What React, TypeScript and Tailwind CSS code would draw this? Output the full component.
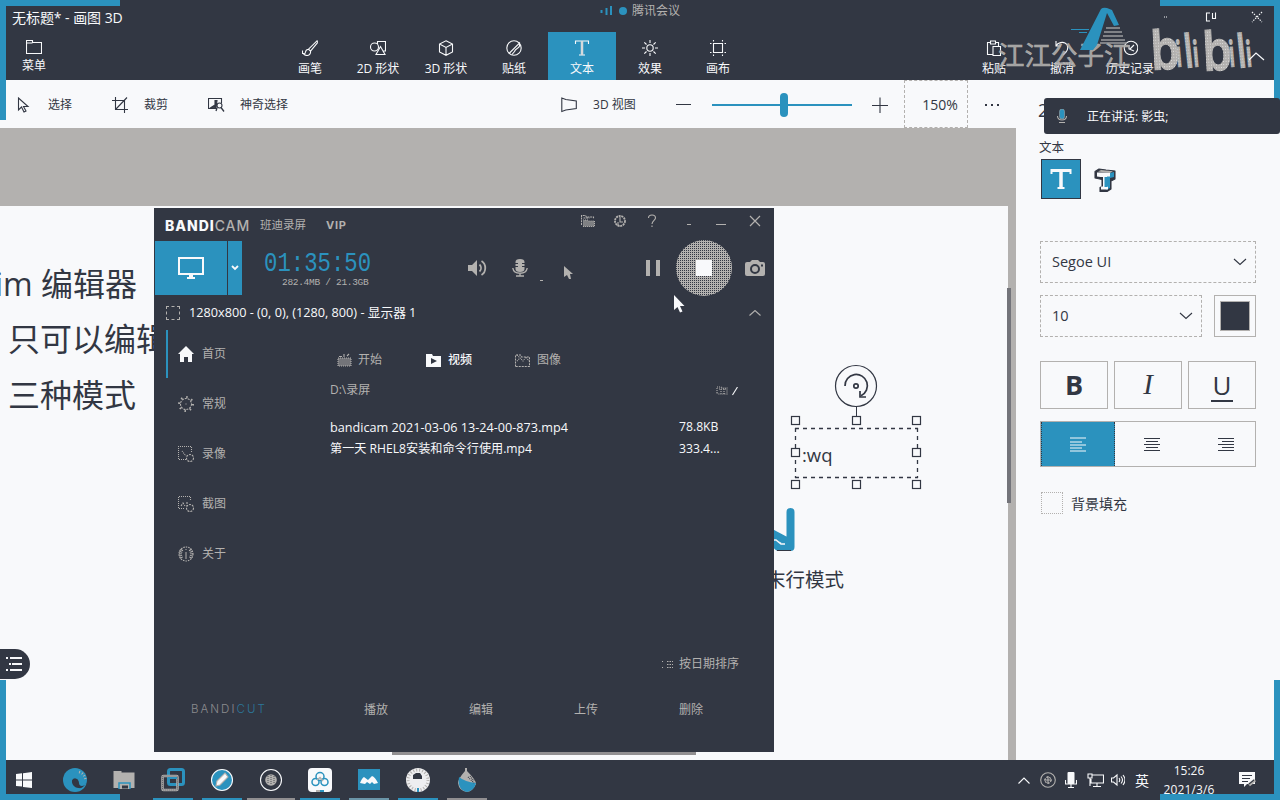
import React from "react";

type IconProps = { children: React.ReactNode; w?: number; h?: number; className?: string };

function Icon({ children, w = 16, h = 16, className = "" }: IconProps) {
  return (
    <svg
      width={w}
      height={h}
      viewBox={`0 0 ${w} ${h}`}
      fill="none"
      stroke="currentColor"
      strokeWidth="1.1"
      className={"block shrink-0 " + className}
    >
      {children}
    </svg>
  );
}

const ribbon = [
  {
    label: "画笔",
    icon: (
      <>
        <path d="M15 .8 6.500 9.200l2 2L15.600 2.500c.5-.9.1-1.700-.6-1.700ZM6.500 9.200 8.500 11.200c.4 2-1 4.300-3.500 4.300-1.600 0-2.500-.5-3.200-1.300 1-.2 1.600-1 1.700-2.200.2-1.700 1.500-2.700 3-2.800Z" />
        <path d="M.5 10.500v3h2" />
      </>
    ),
  },
  {
    label: "2D 形状",
    icon: (
      <>
        <circle cx="4.500" cy="7" r="4" />
        <path d="M7.500 4V1.500H15.500V11h-2.500M10.500 6.500 6 14.500h9Z" />
      </>
    ),
  },
  {
    label: "3D 形状",
    icon: <path d="M8 .8 14.500 4v8L8 15.300 1.500 12V4ZM1.500 4 8 7.500 14.500 4M8 7.500v7.800" />,
  },
  {
    label: "贴纸",
    icon: (
      <>
        <circle cx="8" cy="8" r="7.200" />
        <path d="M3 13.500 13.500 3v3c-1 3-4 2-5 5.500L6 14.500" />
      </>
    ),
  },
  {
    label: "文本",
    icon: (
      <>
        <path d="M1.500 4V1h13v3M5 15h6" />
        <path d="M8 1v14" stroke="#d5d9dc" strokeWidth="2.500" />
      </>
    ),
  },
  {
    label: "效果",
    icon: (
      <>
        <circle cx="8" cy="8" r="3.200" />
        <path d="M8 0v3M8 13v3M0 8h3M13 8h3M2.300 2.300l2.200 2.200M11.500 11.500l2.200 2.200M2.300 13.700l2.200-2.200M11.500 4.500l2.200-2.200" />
      </>
    ),
  },
  {
    label: "画布",
    icon: (
      <path d="M3.500 3.500h9v9h-9ZM3.500 0v1.500M12.500 0v1.500M3.500 14.500V16M12.500 14.500V16M0 3.500h1.500M14.500 3.500H16M0 12.500h1.500M14.500 12.500H16" />
    ),
  },
];

function RibbonButton({ label, icon, active = false }: { label: string; icon: React.ReactNode; active?: boolean }) {
  return (
    <div
      className={
        "flex h-12 w-[68px] shrink-0 flex-col items-center pt-2 " + (active ? "bg-[#2b92be]" : "")
      }
    >
      <Icon>{icon}</Icon>
      <span className="mt-1 text-[12px] leading-[18px] whitespace-nowrap">{label}</span>
    </div>
  );
}

function Header() {
  return (
    <header className="flex h-20 shrink-0 flex-col bg-[#323743] text-[#f8f9fb]">
      <div className="flex h-8 items-center pl-3 pt-[2px]">
        <span className="w-[588px] text-[14px] tracking-[-0.050px]">无标题* - 画图 3D</span>
        <div className="-mt-3 flex items-center text-[#b3b1af]">
          <Icon w={13} h={12} className="text-[#2b92be]">
            <path d="M1.500 5v3M6.500 3v7M11 1v9" strokeWidth="2" />
          </Icon>
          <span className="ml-[6px] h-2 w-2 rounded-full bg-[#2b92be]" />
          <span className="ml-[5px] text-[12px]">腾讯会议</span>
        </div>
        <div className="ml-auto flex items-center text-[#f8f9fb]">
          <Icon w={10} h={12}><path d="M3 6h4" strokeDasharray="1 1" /></Icon>
          <Icon w={12} h={12} className="ml-[34px]"><path d="M5 2H1.500v8H5M7.500 2v6M10.500 1.500v6H8" /></Icon>
          <Icon w={12} h={12} className="ml-[34px] mr-[17px]"><path d="m1 1 10 10M11 1 1 11" strokeDasharray="1.500 1.200" /></Icon>
        </div>
      </div>
      <div className="flex h-12">
        <div className="flex w-[68px] flex-col items-center pt-2">
          <Icon><path d="M.5 .5h6v2h9v11H.5ZM.5 3h6" /></Icon>
          <span className="mt-px text-[12px] leading-[18px]">菜单</span>
        </div>
        <div className="ml-[208px] flex">
          {ribbon.map((r) => (
            <RibbonButton key={r.label} label={r.label} icon={r.icon} active={r.label === "文本"} />
          ))}
        </div>
        <div className="ml-[208px] flex">
          <RibbonButton label="粘贴" icon={<path d="M4.500 2.500h-3v12h5M4.500 1v3h5V1ZM9.500 2.500h3v4M7 6.500h7.500v9H7Z" />} />
          <RibbonButton label="撤消" icon={<path d="M2 1v5h5M2 6c2-4 7-4 9-3 4 2 3 7 1 9l-3 3" />} />
          <RibbonButton
            label="历史记录"
            icon={
              <>
                <circle cx="9" cy="8" r="6.800" />
                <path d="M7 5v4l5 2M12 5l-4 4" />
              </>
            }
          />
        </div>
      </div>
    </header>
  );
}

function ViewBar() {
  return (
    <div className="flex h-12 w-[1016px] shrink-0 items-center bg-[#f8f9fb] pt-px text-[12px] text-[#323743]">
      <div className="flex items-center pl-[17px]">
        <Icon w={13} h={16}><path d="M1.500 1v12l3-3 2.500 5 2-1-2.500-4.500H11Z" /></Icon>
        <span className="ml-[18px]">选择</span>
      </div>
      <div className="ml-[40px] flex items-center">
        <Icon><path d="M3.500 0v12.500H16M0 3.500h12.500V16M15 .5 4 12" /></Icon>
        <span className="ml-4">裁剪</span>
      </div>
      <div className="ml-[40px] flex items-center">
        <Icon w={17}>
          <path d="M9 11.500H.5v-10h13V6" />
          <path d="M3 10.500 7 8V3.500h2L8 11Z" fill="currentColor" />
          <circle cx="11.500" cy="8.500" r="2.500" />
          <path d="m13 10.500 3 4M9 11l-1 3" strokeWidth="1.300" />
        </Icon>
        <span className="ml-[15px]">神奇选择</span>
      </div>
      <div className="ml-[273px] flex w-[75px] items-center">
        <Icon><path d="M.8 1v13.500l4-1.500 10.500-1.500V4L4.800 2.500Z" /></Icon>
        <span className="ml-4 whitespace-nowrap">3D 视图</span>
      </div>
      <div className="ml-[40px] h-px w-[15px] bg-[#323743]" />
      <div className="ml-[21px] flex h-6 w-[140px] items-center">
        <div className="h-[2px] w-[68px] bg-[#2b92be]" />
        <div className="h-6 w-2 rounded-[4px] bg-[#2b92be]" />
        <div className="h-[2px] w-16 bg-[#2b92be]" />
      </div>
      <Icon className="ml-5"><path d="M0 8.500h16M8 .5v16" /></Icon>
      <div className="-mt-px ml-4 flex h-12 w-16 items-center justify-center border border-dashed border-[#b3b1af] pl-2 text-[14px]">150%</div>
      <div className="ml-[17px] flex gap-1">
        <span className="h-[2px] w-[2px] bg-[#323743]" />
        <span className="h-[2px] w-[2px] bg-[#323743]" />
        <span className="h-[2px] w-[2px] bg-[#323743]" />
      </div>
    </div>
  );
}

const handles = [
  [791, 416], [852, 416], [912, 416],
  [791, 448], [912, 448],
  [791, 480], [852, 480], [912, 480],
];

function Canvas() {
  return (
    <div className="flex h-[632px] w-[1016px] flex-col bg-[#b3b1af] pt-[78px]">
      <div className="relative h-[554px] w-[1008px] overflow-hidden bg-[#f8f9fb] text-[#323743]">
        <div className="absolute left-[-5px] top-[54px] whitespace-nowrap text-[32px] leading-[48px]">im 编辑器</div>
        <div className="absolute left-2 top-[109px] whitespace-nowrap text-[32px] leading-[48px]">只可以编辑</div>
        <div className="absolute left-2 top-[165px] whitespace-nowrap text-[32px] leading-[48px]">三种模式</div>
        <div className="absolute right-[164px] top-[359px] whitespace-nowrap text-[19.500px] leading-[30px]">末行模式</div>
        <div className="absolute left-[802px] top-[234px] text-[18.500px] leading-[30px]">:wq</div>
        <svg className="absolute left-0 top-0" width="1008" height="554" viewBox="0 206 1008 554" fill="none" stroke="#323743">
          <circle cx="856" cy="386" r="20.500" strokeWidth="1.200" />
          <path d="M845 386a11.200 11.200 0 1 1 16 9.800" strokeWidth="1.700" />
          <path d="M860 391v6h6" strokeWidth="1.700" />
          <circle cx="856" cy="386" r="2.200" strokeWidth="1.700" />
          <path d="M856.500 407v9" />
          <path d="M795 428.500H918M795 477.500H918" strokeDasharray="4 4" strokeWidth="1.300" />
          <path d="M795.500 428v50M917.500 428v50" strokeDasharray="4 4" strokeWidth="1.300" />
          {handles.map(([x, y]) => (
            <rect key={`${x}-${y}`} x={x + 0.5} y={y + 0.5} width="8" height="8" fill="#f8f9fb" strokeWidth="1.200" />
          ))}
          <path d="M790.500 512v35h-12l-14-13 3-3 17 9" stroke="#2b92be" strokeWidth="8" strokeLinejoin="round" strokeLinecap="round" />
          <path d="M774 540h2l5 4h4" stroke="#f8f9fb" strokeWidth="1.500" />
          <path d="M777 550.500h14" />
        </svg>
        <div className="absolute left-[392px] top-[546px] h-[3px] w-[304px] bg-[#918f91]" />
      </div>
    </div>
  );
}

const alignments = [
  { d: "M0 1h16M0 5h12M0 8h16M0 11h12M0 14h16", cell: "w-[74px] border-x border-dotted border-[#323743] bg-[#2b92be] text-[#f8f9fb]" },
  { d: "M0 1.500h16M2 4.500h12M0 7.500h16M2 10.500h12M0 13.500h16", cell: "w-[74px]" },
  { d: "M0 1.500h16M4 4.500h12M0 7.500h16M4 10.500h12M0 13.500h16", cell: "w-[66px] pl-2" },
];

function Chevron() {
  return <Icon w={14} h={8}><path d="m1 1 6 5.500L13 1" /></Icon>;
}

function SidePanel() {
  return (
    <aside className="flex h-[680px] w-[264px] flex-col bg-[#f8f9fb] pl-6 text-[#323743]">
      <div className="-ml-[2px] mt-[14px] h-8 text-[18px] leading-8">2D 文本</div>
      <div className="-ml-px mt-[12px] text-[12.500px] leading-[19px]">文本</div>
      <div className="mt-[2px] flex h-10 items-center">
        <div className="ml-px flex h-10 w-10 items-center justify-center border border-[#323743] bg-[#2b92be] text-[#f8f9fb]">
          <Icon w={22} h={22}>
            <path d="M1.500 6V2h19v4M7.500 20h7M2 3h18" strokeWidth="2" />
            <path d="M11 2v18" strokeWidth="3.500" />
          </Icon>
        </div>
        <Icon w={23} h={25} className="ml-[13px] mt-[2px]">
          <path d="M1 3.500 5 1l7 1 9 1v8l-4 2v8l-4 2.500H6v-4l2-1v-7L1 10Z" fill="#323743" stroke="#323743" strokeLinejoin="round" />
          <path d="m16 5 4-1v5l-4 1v10l-4 2V8h4Z" fill="#2b92be" stroke="none" />
          <path d="M3 4.500h13v4h-3v10h1v3H7v-3h2V9H6.500L3 8.500Z" fill="#f8f9fb" stroke="none" />
          <path d="M4 3.500 7 2l12 1.300-3 1.700Z" fill="#b3b1af" stroke="none" />
          <path d="M12 9v10" stroke="#2b92be" strokeWidth="3" />
        </Icon>
      </div>
      <div className="mt-[42px] flex h-[42px] w-[216px] items-center justify-between border border-dashed border-[#b3b1af] pl-[11px] pr-2 text-[14.500px]">
        <span className="-mt-px">Segoe UI</span>
        <Chevron />
      </div>
      <div className="mt-3 flex gap-3">
        <div className="flex h-[42px] w-[162px] items-center justify-between border border-dashed border-[#b3b1af] pl-[11px] pr-2 text-[14.500px]">
          <span className="-mt-px">10</span>
          <Chevron />
        </div>
        <div className="flex h-[42px] w-[42px] items-center justify-center border border-[#b3b1af]">
          <div className="h-[30px] w-[30px] border border-[#b3b1af] bg-[#323743]" />
        </div>
      </div>
      <div className="mt-6 flex gap-[6px]">
        <div className="flex h-12 w-[68px] items-center justify-center border border-[#b3b1af] text-[27px] font-bold">B</div>
        <div className="flex h-12 w-[68px] items-center justify-center border border-[#b3b1af] font-['Liberation_Serif'] text-[29px] italic">I</div>
        <div className="flex h-12 w-[68px] flex-col items-center border border-[#b3b1af] pt-[7px]">
          <span className="h-[31px] text-[26px] leading-[33px]">U</span>
          <span className="h-[2px] w-[22px] shrink-0 bg-[#323743]" />
        </div>
      </div>
      <div className="mt-3 flex h-[46px] w-[216px] border border-[#b3b1af]">
        {alignments.map((a) => (
          <div key={a.d} className={"flex shrink-0 items-center justify-center " + a.cell}>
            <Icon h={15}><path d={a.d} strokeWidth="1" /></Icon>
          </div>
        ))}
      </div>
      <div className="mt-[25px] flex items-center text-[14px]">
        <div className="ml-px h-[22px] w-[22px] border border-dotted border-[#b3b1af]" />
        <span className="ml-2">背景填充</span>
      </div>
    </aside>
  );
}

const nav = [
  { label: "首页", icon: <path d="M8 0 0 8h2v8h4v-5h4v5h4V8h2Z" fill="#f8f9fb" stroke="none" /> },
  {
    label: "常规",
    icon: (
      <>
        <circle cx="8" cy="8" r="5.500" strokeDasharray="2 1" />
        <circle cx="8" cy="8" r="7" strokeDasharray="1.500 4" strokeWidth="2" />
        <path d="M7.500 8h1" />
      </>
    ),
  },
  {
    label: "录像",
    icon: (
      <>
        <path d="M8 13.500H.5V.5h13V6" strokeDasharray="1 1" />
        <circle cx="12" cy="12" r="3.500" strokeDasharray="2 1" />
        <path d="m4 5 4 5" strokeDasharray="1 1" />
      </>
    ),
  },
  {
    label: "截图",
    icon: (
      <>
        <path d="M6 12.500H.5V.5h12V4" strokeDasharray="1 1" />
        <circle cx="12" cy="12" r="3.500" strokeDasharray="2 1" />
        <path d="m3 10 2-3 2 3M9 6v4" strokeDasharray="2 1" />
      </>
    ),
  },
  {
    label: "关于",
    icon: (
      <>
        <circle cx="8" cy="8" r="7" strokeDasharray="1.500 1" />
        <path d="M4 3.500Q1 8 4 12.500M12 3.500q3 4.500 0 9" strokeWidth="3" strokeDasharray="1 1" />
        <path d="M8 3v1M8 6v7" strokeWidth="1" />
      </>
    ),
  },
];

const files = [
  { name: "bandicam 2021-03-06 13-24-00-873.mp4", size: "78.8KB", type: "text-[12.650px]" },
  { name: "第一天 RHEL8安装和命令行使用.mp4", size: "333.4...", type: "text-[12.150px]" },
];

function Bandicam() {
  return (
    <section className="absolute left-[154px] top-[208px] flex h-[544px] w-[620px] flex-col bg-[#323743] text-[12px] text-[#b3b1af]">
      <div className="flex h-[33px] shrink-0 items-center pl-[11px] pt-px">
        <span className="w-[95px] font-['Inter'] text-[14px] font-extrabold tracking-[0.950px] text-[#f8f9fb]">
          BANDI<span className="font-medium text-[#b3b1af]">CAM</span>
        </span>
        <span className="w-[66px] text-[11.500px]">班迪录屏</span>
        <span className="w-[90px] font-['Inter'] text-[11px] font-bold tracking-[0.700px]">VIP</span>
        <div className="-mt-2 ml-[165px] flex items-center">
          <Icon w={14} h={14}>
            <path d="M.5 11V1.500h4l1 1.500h7v2M2.500 4h6" strokeDasharray="2 .7" />
            <path d="M2.500 12.500V6h4l1 1h6v5.500Z" fill="currentColor" fillOpacity=".6" strokeDasharray="1 1" />
          </Icon>
          <Icon w={12} h={14} className="ml-[19px]">
            <circle cx="6" cy="7" r="5" strokeWidth="1.800" strokeDasharray="2 .7" />
            <path d="M6 3v5h3M4 12V8" />
          </Icon>
          <Icon w={10} h={14} className="ml-[21px]"><path d="M1.500 4c0-4 7-4 7 0 0 2-3.500 3-3.500 6M5 11.500V13" /></Icon>
          <span className="ml-[30px] mt-2 h-[2px] w-1 border-t border-[#b3b1af]" />
          <span className="ml-[25px] mt-2 h-[2px] w-[10px] border-t border-[#b3b1af]" />
          <Icon w={12} h={12} className="ml-[23px]"><path d="m1 1 10 10M11 1 1 11" strokeWidth="1.200" /></Icon>
        </div>
      </div>
      <div className="flex h-[54px] shrink-0 items-center pl-px">
        <div className="flex h-[54px] w-[72px] shrink-0 items-center justify-center bg-[#2b92be] text-[#f8f9fb]">
          <Icon w={26} h={22}>
            <path d="M1 1h24v16H1Z" strokeWidth="2" />
            <path d="M11 18h4v2h2v2H9v-2h2Z" fill="currentColor" stroke="none" />
          </Icon>
        </div>
        <div className="ml-px flex h-[54px] w-[14px] shrink-0 items-center justify-center bg-[#2b92be] text-[#f8f9fb]">
          <Icon w={8} h={6}><path d="m1 1 3 3 3-3" strokeWidth="1.800" /></Icon>
        </div>
        <div className="ml-[22px] flex w-[204px] shrink-0 flex-col pt-1">
          <span className="block h-[26px] origin-center scale-y-125 font-['Liberation_Mono'] text-[22.300px] leading-[26px] text-[#2b92be]">01:35:50</span>
          <span className="h-[14px] pl-[18px] font-['Liberation_Mono'] text-[9.500px] leading-[14px] tracking-[-0.300px] whitespace-pre">282.4MB / 21.3GB</span>
        </div>
        <Icon w={19} h={18}>
          <path d="M0 6h4l5-5v16l-5-5H0Z" fill="currentColor" stroke="none" />
          <path d="M11.500 5.500c2 2 2 5 0 7M13.500 2c5 3 5 11 0 14" strokeWidth="1.800" />
        </Icon>
        <Icon w={16} h={18} className="ml-[25px]">
          <path d="M3.500 3a4.500 3 0 0 1 9 0v7a4.500 3 0 0 1-9 0Z" fill="currentColor" stroke="none" />
          <path d="M3 4.500h3M10 4.500h3M3 7.500h3M10 7.500h3" stroke="#323743" />
          <path d="M.8 9c1 7 13.400 7 14.400 0M8 14v3M4 17h8" strokeWidth="1.400" />
        </Icon>
        <span className="ml-3 mt-6 h-px w-[3px] bg-[#b3b1af]" />
        <Icon w={9} h={13} className="ml-[21px] mt-2"><path d="M0 0v11l3-2 2 4h2L6 8h3Z" fill="currentColor" stroke="none" /></Icon>
        <div className="ml-[73px] flex gap-[6px]">
          <span className="h-4 w-[4px] bg-[#b3b1af]" />
          <span className="h-4 w-[4px] bg-[#b3b1af]" />
        </div>
        <svg width="56" height="56" viewBox="0 0 56 56" className="ml-4 shrink-0">
          <defs>
            <pattern id="mesh" width="2" height="2" patternUnits="userSpaceOnUse">
              <rect width="2" height="2" fill="#b3b1af" />
              <rect width="1" height="1" fill="#323743" />
            </pattern>
          </defs>
          <circle cx="28" cy="28" r="28" fill="url(#mesh)" />
          <rect x="20" y="20" width="16" height="16" fill="#f8f9fb" />
        </svg>
        <Icon w={20} h={16} className="ml-[13px]">
          <path d="M0 4a2 2 0 0 1 2-2h3l2-2h6l2 2h3a2 2 0 0 1 2 2v10a2 2 0 0 1-2 2H2a2 2 0 0 1-2-2Z" fill="currentColor" stroke="none" />
          <circle cx="10" cy="9" r="4" stroke="#323743" strokeWidth="2" />
          <path d="M16 5.500h2" stroke="#323743" strokeWidth="2" />
        </Icon>
      </div>
      <div className="flex h-[34px] shrink-0 items-center pl-3 pt-px text-[#f8f9fb]">
        <span className="h-[14px] w-[14px] border border-dashed border-[#b3b1af]" />
        <span className="ml-[9px] w-[560px] text-[12.700px] whitespace-nowrap">1280x800 - (0, 0), (1280, 800) - 显示器 1</span>
        <Icon w={12} h={6} className="text-[#b3b1af]"><path d="m.5 5.500 5.500-5 5.500 5" /></Icon>
      </div>
      <div className="flex flex-1">
        <nav className="flex w-[176px] flex-col gap-[2px] pt-px">
          {nav.map((n, i) => (
            <div key={n.label} className={"ml-3 flex h-12 items-center pl-[10px] " + (i === 0 ? "border-l-2 border-[#2b92be]" : "border-l-2 border-transparent")}>
              <Icon>{n.icon}</Icon>
              <span className="ml-2">{n.label}</span>
            </div>
          ))}
        </nav>
        <div className="flex flex-1 flex-col">
          <div className="mt-[21px] flex h-5 items-center pl-[7px]">
            <Icon w={15} h={14}>
              <path d="M1 13V5h13v8Z" fill="currentColor" fillOpacity=".5" strokeDasharray="1 1" />
              <path d="M2 3.500h3M7 1v3M10 3l2-2" />
            </Icon>
            <span className="ml-[6px] w-[68px]">开始</span>
            <Icon w={15} h={13}>
              <path d="M0 0h6l1 2h8v11H0Z" fill="#f8f9fb" stroke="none" />
              <path d="M5 4v6l6-3Z" fill="#323743" stroke="none" />
            </Icon>
            <span className="ml-[7px] w-[67px] font-medium text-[#f8f9fb]">视频</span>
            <Icon w={15} h={13}>
              <path d="M.5 12.500V1h5l1 2h8v9.500Z" strokeDasharray="2 1" />
              <path d="m2 7 3-3 3 3 3-4 3 4M2 1l5 5" strokeDasharray="1 1" />
            </Icon>
            <span className="ml-[7px]">图像</span>
          </div>
          <div className="mt-[10px] flex h-5 items-center">
            <span className="w-[386px]">D:\录屏</span>
            <Icon w={12} h={10}><path d="M1 8V2h4l1 1h5v6H3ZM3 4h8M5 4v5M8 4v5" strokeDasharray="1 1" /></Icon>
            <Icon w={6} h={9} className="ml-1 mt-[3px] text-[#f8f9fb]"><path d="m5.500 0-5 8" strokeWidth="1.100" /></Icon>
          </div>
          <div className="mt-4 flex flex-col text-[#f8f9fb]">
            {files.map((f) => (
              <div key={f.name} className="flex h-[22px] items-center whitespace-nowrap">
                <span className={"w-[349px] " + f.type}>{f.name}</span>
                <span className="text-[12.200px]">{f.size}</span>
              </div>
            ))}
          </div>
          <div className="mt-[194px] flex h-5 items-center pl-[332px]">
            <Icon w={12} h={9}><path d="M.5 1v1M.5 7v1M5 1.500h6M5 4.500h6M5 7.500h6" strokeDasharray="1.500 1" /></Icon>
            <span className="ml-[5px]">按日期排序</span>
          </div>
          <div className="-ml-[139px] mt-[26px] flex h-5 items-center">
            <span className="w-[173px] font-['Inter'] text-[11.500px] font-light tracking-[2.050px] opacity-70">
              BANDI<span className="text-[#2b92be]">CUT</span>
            </span>
            <span className="w-[105px]">播放</span>
            <span className="w-[105px]">编辑</span>
            <span className="w-[105px]">上传</span>
            <span>删除</span>
          </div>
        </div>
      </div>
    </section>
  );
}

const apps = [
  {
    name: "edge",
    line: "",
    icon: (
      <>
        <circle cx="12" cy="12" r="12" fill="#2b92be" stroke="none" />
        <path d="M24 14c-2 5-8 5-8 1 0-3-3-6-6-4-3 3-1 7 2 10 5 1 9-2 12-7Z" fill="#323743" stroke="none" />
        <path d="M9 11c-1 7 4 10 11 9-5 5-13 4-14-3 0-3 1-5 3-6Z" fill="#2b92be" stroke="none" />
        <path d="M11 10q5-1 6 4 2 2 6-2" fill="#2b92be" stroke="none" />
        <path d="M16 4c4 1 6 4 6.500 8" stroke="#b3b1af" strokeDasharray="1 2" strokeWidth="2.500" />
      </>
    ),
  },
  {
    name: "folder",
    line: "",
    icon: (
      <>
        <path d="M1.500 3h8v1.500h13V20h-21Z" fill="#b3b1af" stroke="none" />
        <path d="M7 21v-6h11v6" fill="#b3b1af" stroke="#2b92be" strokeWidth="1.500" />
        <path d="M10 20.500v-3h6v3Z" fill="#323743" stroke="none" />
      </>
    ),
  },
  {
    name: "vm",
    line: "bg-[#2b92be]",
    icon: (
      <>
        <rect x="7.500" y="1.500" width="15" height="15" rx="2" stroke="#2b92be" strokeWidth="3" />
        <rect x="1.500" y="8" width="15" height="14" rx="1" stroke="#b3b1af" strokeWidth="2.500" />
        <rect x="1.500" y="8" width="15" height="14" rx="1" stroke="#323743" strokeWidth=".8" strokeDasharray="1 1" />
        <path d="M8 16.500V10h8" stroke="#2b92be" strokeWidth="2" />
      </>
    ),
  },
  {
    name: "pen",
    line: "bg-[#2b92be]",
    icon: (
      <>
        <circle cx="12" cy="12" r="10.500" fill="#2b92be" stroke="#f8f9fb" />
        <path d="m6 18 1-5 8-8 3 4-8 8Z" fill="#f8f9fb" stroke="#b3b1af" />
      </>
    ),
  },
  {
    name: "recorder",
    line: "bg-[#918f91]",
    icon: (
      <>
        <circle cx="12" cy="12" r="10.500" stroke="#f8f9fb" />
        <circle cx="12" cy="12" r="5.800" fill="#b3b1af" stroke="none" />
        <path d="M9 8v8M12 7v10M15 8v8" stroke="#323743" strokeWidth=".8" strokeDasharray="1 1" />
      </>
    ),
  },
  {
    name: "cloud",
    line: "bg-[#2b92be]",
    icon: (
      <>
        <rect width="24" height="24" rx="4" fill="#f8f9fb" stroke="none" />
        <circle cx="12" cy="8.500" r="4" stroke="#2b92be" strokeWidth="1.500" />
        <circle cx="7.500" cy="14" r="3.500" stroke="#2b92be" strokeWidth="1.500" />
        <circle cx="16.500" cy="14" r="3.500" stroke="#2b92be" strokeWidth="1.500" />
        <path d="m9 12 3-2.500 3 3.500" stroke="#b3b1af" strokeWidth="1.500" />
        <path d="M8 23h4" stroke="#b3b1af" strokeWidth="2" />
        <path d="M12 23h4" stroke="#2b92be" strokeWidth="2" />
      </>
    ),
  },
  {
    name: "meeting",
    line: "bg-[#6b95a8]",
    icon: (
      <>
        <rect x="1" y="1" width="22" height="21" fill="#2b92be" stroke="none" />
        <path d="M3 15q2-5 4-6l4 3 4-4q3 1 6 7l-4 1-2-2-2 2-3-2-2 2Z" fill="#f8f9fb" stroke="none" />
      </>
    ),
  },
  {
    name: "lamp",
    line: "bg-[#2b92be]",
    icon: (
      <>
        <circle cx="12" cy="12" r="12" fill="#eeeef0" stroke="none" />
        <circle cx="12" cy="12" r="10" stroke="#b3b1af" strokeWidth="3" strokeDasharray="1 2" />
        <path d="M7 11V7l3-2h4l2 3v3Z" fill="#323743" stroke="none" />
        <path d="M12 20v4" stroke="#2b92be" strokeWidth="2" />
      </>
    ),
  },
  {
    name: "drop",
    line: "bg-[#918f91]",
    icon: (
      <>
        <path d="M10 0h2v3q9 9 9 13-3 7-9 8-8-1-9-9 0-4 7-12Z" fill="#b3b1af" stroke="none" />
        <path d="M4 9q6 5 17 6-2 8-9 9-10-2-8-15Z" fill="#2b92be" stroke="none" />
        <path d="m15 8 4 5M13 9l6 6" stroke="#323743" strokeDasharray="1 1" />
      </>
    ),
  },
];

function Taskbar() {
  return (
    <footer className="flex h-10 shrink-0 bg-[#323743] text-[#f8f9fb]">
      <div className="flex w-[50px] items-center pl-4">
        <Icon><path d="M0 2l6-.7v6.200H0ZM7 1.200 16 0v7.500H7ZM0 8.500h6v6L0 14ZM7 8.500h9V16l-9-1Z" fill="currentColor" stroke="none" /></Icon>
      </div>
      {apps.map((a) => (
        <div key={a.name} className="flex w-[49px] flex-col items-center justify-between pt-2">
          <Icon w={24} h={24}>{a.icon}</Icon>
          <div className={(a.name === "recorder" ? "h-[2px] w-12 " : "h-[2px] w-10 ") + a.line} />
        </div>
      ))}
      <div className="ml-[527px] flex items-center">
        <Icon w={12} h={7}><path d="m.5 6.500 5.500-5.500 5.500 5.500" /></Icon>
        <Icon className="ml-[10px] text-[#b3b1af]">
          <circle cx="8" cy="8" r="7.300" />
          <circle cx="8" cy="8" r="3" strokeWidth="1.300" strokeDasharray="2 1" />
          <path d="M8 4v8M4 8h8" />
        </Icon>
        <Icon w={12} h={16} className="ml-[9px]">
          <rect x="2.500" y="0" width="7" height="12" rx="1" fill="currentColor" stroke="none" />
          <path d="M.5 8v4h11V8M6 12v3M3 15.500h6" />
        </Icon>
        <Icon w={17} h={14} className="ml-[10px]">
          <path d="M5 2h11.500v8H4V6M1 1h4v4H1ZM3 5v8M10 10v3M6 13.500h8" />
        </Icon>
        <Icon w={14} h={14} className="ml-[7px]"><path d="M.5 5v4h2l3.500 3V2L2.500 5ZM8 5q1.500 2 0 4M10 3.500q3 3.500 0 7M12 2q4 5 0 10" /></Icon>
        <span className="ml-[10px] w-5 text-[14px]">英</span>
      </div>
      <div className="-mt-px flex w-[68px] flex-col items-center text-[12px] leading-[19px]">
        <span className="pt-[2px]">15:26</span>
        <span className="tracking-[0.150px]">2021/3/6</span>
      </div>
      <Icon w={17} h={17} className="ml-4 mt-[11px]">
        <path d="M0 1h16v12H8l-3 3v-3H0Z" fill="currentColor" stroke="none" />
        <path d="M3 4.500h10M3 7.500h8M3 10.500h6" stroke="#323743" />
        <path d="m10 14 6-5" stroke="#b3b1af" strokeWidth="3" />
        <path d="m10 13 5-4" stroke="#323743" />
      </Icon>
    </footer>
  );
}

function Watermark() {
  return (
    <svg className="pointer-events-none absolute left-[990px] top-0" width="290" height="80" viewBox="990 0 290 80">
      <defs>
        <pattern id="grain" width="3" height="3" patternUnits="userSpaceOnUse">
          <rect width="3" height="3" fill="#b3b1af" />
          <rect width="1" height="1" fill="#e4e4e4" />
        </pattern>
      </defs>
      <text x="998" y="65" fontSize="26.500" fill="#b3b1af" stroke="#b3b1af" strokeWidth=".5" fontFamily="Noto Sans CJK SC, sans-serif" fillOpacity=".9">江江公子江</text>
      <path d="M1080 50 1101 9q2-2 6-1l5 2 7 15-5 1-7-13-10 32-4 5Z" fill="#2b92be" />
      <path d="M1106 28h14M1104 32h18M1103 36h20M1101 40h24M1100 43h27" stroke="#9a9c9f" strokeWidth="1.500" />
      <path d="M1071 29.500h18M1079 32.500h8" stroke="#2b92be" />
      <g fill="url(#grain)" stroke="url(#grain)" strokeWidth="1" fontFamily="Inter, sans-serif" fontWeight="600">
        <text transform="translate(1152 70) rotate(-3) scale(.82 1)" fontSize="56">b</text>
        <text transform="translate(1177 67) rotate(-5) scale(.6 1)" fontSize="36">i</text>
        <text transform="translate(1186 68) rotate(-6) scale(.65 1)" fontSize="48">l</text>
        <text transform="translate(1194 67) rotate(-5) scale(.6 1)" fontSize="36">i</text>
        <text transform="translate(1204 71) rotate(-3) scale(.82 1)" fontSize="56">b</text>
        <text transform="translate(1230 67) rotate(-5) scale(.6 1)" fontSize="36">i</text>
        <text transform="translate(1239 68) rotate(-6) scale(.65 1)" fontSize="48">l</text>
        <text transform="translate(1247 67) rotate(-5) scale(.6 1)" fontSize="36">i</text>
      </g>
      <path d="m1249 60 7-7 8 7" stroke="#f8f9fb" strokeWidth="1.200" fill="none" />
    </svg>
  );
}

export default function App() {
  return (
    <div className="relative flex h-[800px] w-[1280px] flex-col overflow-hidden bg-[#f8f9fb] font-['Open_Sans','Noto_Sans_CJK_SC',sans-serif]">
      <Header />
      <div className="flex h-[680px]">
        <main className="flex w-[1016px] flex-col">
          <ViewBar />
          <Canvas />
        </main>
        <SidePanel />
      </div>
      <Taskbar />

      <div className="absolute left-[1007px] top-[288px] h-[215px] w-1 bg-[#73747a]" />
      <Watermark />
      <Bandicam />
      <svg className="absolute left-[674px] top-[295px]" width="12" height="18" viewBox="0 0 12 18">
        <path d="M0 0v15l3.500-3 2.500 5.500 2.500-1L6 11h4.500Z" fill="#f8f9fb" />
      </svg>

      <div className="absolute left-0 top-[649px] flex h-[30px] w-[30px] items-center rounded-r-full bg-[#323743] pl-[6px] text-[#f8f9fb]">
        <Icon h={14}><path d="M0 1h2M4 1h12M3 7h2M6 7h10M0 13h2M4 13h12" strokeWidth="2" /></Icon>
      </div>

      <div className="absolute left-0 top-0 h-[120px] w-[120px] border-l-[6px] border-t-[6px] border-[#2b92be]" />
      <div className="absolute right-0 top-0 h-[120px] w-[120px] border-r-[6px] border-t-[6px] border-[#2b92be]" />
      <div className="absolute bottom-0 left-0 h-[120px] w-[120px] border-b-[6px] border-l-[6px] border-[#2b92be]" />
      <div className="absolute bottom-0 right-0 h-[120px] w-[120px] border-b-[6px] border-r-[6px] border-[#2b92be]" />

      <div className="absolute right-0 top-[98px] flex h-9 w-[236px] items-center rounded-[3px] bg-[#323743] pl-[13px] text-[12px] text-[#f8f9fb]">
        <Icon w={10} h={14}>
          <rect x="2.500" y="0" width="5" height="10" rx="2.500" fill="#2b92be" stroke="#b3b1af" strokeWidth=".5" />
          <path d="M.5 7q0 4 4.500 4t4.500-4M2 13.500h6" stroke="#b3b1af" />
        </Icon>
        <span className="ml-5 mt-px">正在讲话: 影虫;</span>
      </div>
    </div>
  );
}
